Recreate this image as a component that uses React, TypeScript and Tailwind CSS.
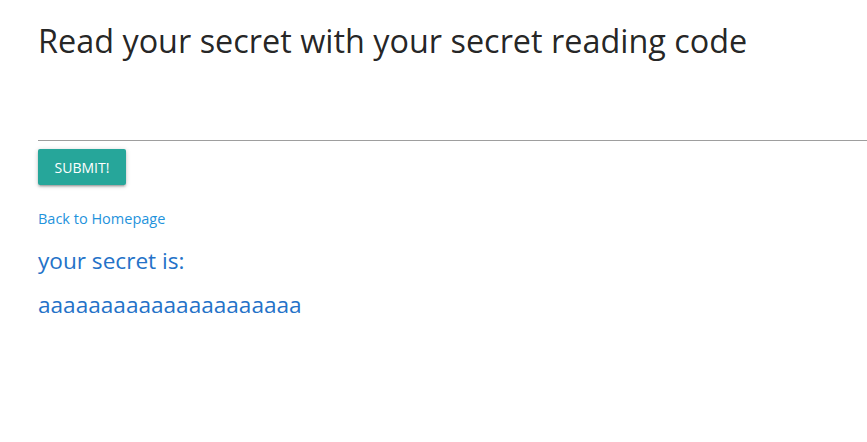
import { useState } from "react";

export default function App() {
    const [code, setCode] = useState("");

    return (
        <div className="min-h-screen bg-white pl-[38px] font-['Open_Sans',sans-serif]">
            <h4 className="pt-[15px] text-[32.4px] leading-[50px] text-[rgba(0,0,0,0.87)]">
                Read your secret with your secret reading code
            </h4>

            <form className="mt-[41px]" onSubmit={(e) => e.preventDefault()}>
                <input
                    value={code}
                    onChange={(e) => setCode(e.target.value)}
                    className="block h-[35px] w-full border-b border-[#9e9e9e] bg-transparent outline-none"
                />
                <button
                    type="submit"
                    className="mt-[8px] h-[36px] w-[88px] rounded-[2px] bg-[#26a69a] text-[14px] uppercase text-white shadow-[0_2px_2px_0_rgba(0,0,0,0.14),0_3px_1px_-2px_rgba(0,0,0,0.12),0_1px_5px_0_rgba(0,0,0,0.2)]"
                >
                    Submit!
                </button>
            </form>

            <a href="#" className="mt-[24px] block text-[14.5px] leading-[20px] text-[#1f93dc]">
                Back to Homepage
            </a>

            <p className="mt-[17px] text-[22.6px] leading-[30px] text-[#2472c8]">your secret is:</p>
            <p className="mt-[14px] text-[22.6px] leading-[30px] text-[#2472c8]">aaaaaaaaaaaaaaaaaaaaa</p>
        </div>
    );
}
